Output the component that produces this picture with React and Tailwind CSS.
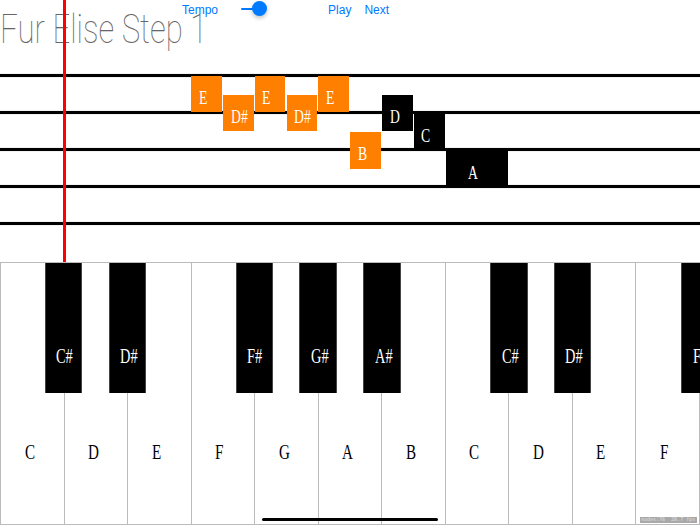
const NOTES = [
  { name: 'E', col: 6, row: 0, color: 'orange' },
  { name: 'D#', col: 7, row: 1, color: 'orange' },
  { name: 'E', col: 8, row: 0, color: 'orange' },
  { name: 'D#', col: 9, row: 1, color: 'orange' },
  { name: 'E', col: 10, row: 0, color: 'orange' },
  { name: 'B', col: 11, row: 3, color: 'orange' },
  { name: 'D', col: 12, row: 1, color: 'black' },
  { name: 'C', col: 13, row: 2, color: 'black' },
  { name: 'A', col: 14, row: 4, color: 'black', span: 2 },
]

const WHITE_KEYS = ['C', 'D', 'E', 'F', 'G', 'A', 'B', 'C', 'D', 'E', 'F']
const BLACK_KEYS = [
  { name: 'C#', at: 1 },
  { name: 'D#', at: 2 },
  { name: 'F#', at: 4 },
  { name: 'G#', at: 5 },
  { name: 'A#', at: 6 },
  { name: 'C#', at: 8 },
  { name: 'D#', at: 9 },
  { name: 'F#', at: 11 },
]

const COL = 700 / 22
const KEY = 700 / 11
const serif = "font-['Liberation_Serif','Times_New_Roman',serif]"

function Slider() {
  return (
    <div className="flex items-center ml-[23px] mt-[1px]">
      <div className="w-[12px] h-[2px] bg-[#007aff] rounded-l" />
      <div className="w-[15px] h-[15px] -ml-[1px] rounded-full bg-[#007aff] shadow-[0_2px_4px_rgba(0,0,0,0.25)]" />
    </div>
  )
}

export default function App() {
  return (
    <div className="relative w-[700px] h-[525px] overflow-hidden bg-white">
      {/* Header: title and controls share one grid cell */}
      <div className="grid h-[62px]">
        <div className="col-start-1 row-start-1">
          <div className="mt-[9px] inline-block origin-left scale-x-[0.76] font-['Roboto',sans-serif] font-thin text-[41px] leading-none text-[#666] whitespace-nowrap">
            Fur Elise Step 1
          </div>
        </div>
        <div className="col-start-1 row-start-1 flex items-start font-['Liberation_Sans',Arial,sans-serif] text-[12px] leading-none text-[#007aff]">
          <span className="ml-[182px] mt-[4px]">Tempo</span>
          <Slider />
          <span className="ml-[61px] mt-[4px]">Play</span>
          <span className="ml-[13px] mt-[4px]">Next</span>
        </div>
      </div>

      {/* Staff */}
      <div className="relative h-[200px]">
        <div className="flex flex-col gap-[34px] pt-[12px]">
          {[0, 1, 2, 3, 4].map((i) => (
            <div key={i} className="h-[3px] bg-black shadow-[0_0_1px_#777]" />
          ))}
        </div>
        {NOTES.map((n, i) => (
          <div
            key={i}
            className={`absolute h-[36.5px] flex items-center pt-[7px] ${n.span ? 'pl-[22px]' : 'pl-[7.5px]'} ${n.color === 'orange' ? 'bg-[#ff8000]' : 'bg-black'}`}
            style={{
              left: n.col * COL + 0.3,
              top: 13.7 + n.row * 18.8,
              width: (n.span || 1) * COL - 1.2,
            }}
          >
            <span className={`inline-block origin-left scale-x-[0.72] text-[19px] leading-none text-white ${serif}`}>{n.name}</span>
          </div>
        ))}
      </div>

      {/* Keyboard */}
      <div className="relative h-[263px] flex border-t border-r border-b border-[#bbb]">
        {WHITE_KEYS.map((k, i) => (
          <div key={i} className="flex-1 border-l border-[#bbb] pl-[23.5px] pt-[178px]">
            <span className={`inline-block origin-left scale-x-[0.72] text-[21px] leading-none text-black ${serif}`}>{k}</span>
          </div>
        ))}
        {BLACK_KEYS.map((k, i) => (
          <div
            key={i}
            className="absolute top-0 h-[130px] w-[37.5px] bg-black border-x border-[#444] pl-[10.5px] pt-[82px]"
            style={{ left: k.at * KEY - 18.75 }}
          >
            <span className={`inline-block origin-left scale-x-[0.72] text-[20px] leading-none text-white ${serif}`}>{k.name}</span>
          </div>
        ))}
      </div>

      {/* Playhead */}
      <div className="absolute left-[62.5px] top-0 w-[3px] h-[262px] bg-[#ff0000]" />

      {/* Home indicator */}
      <div className="absolute left-[262px] top-[517.5px] w-[176px] h-[3px] rounded-full bg-black" />

      {/* Debug label */}
      <div className="absolute left-[640px] top-[517px] w-[57px] h-[5.5px] bg-[#a9a9a9] flex items-center pl-[1px] font-['DejaVu_Sans_Mono',monospace] text-[5px] leading-none text-[#e0e0e0] whitespace-nowrap">
        nodes:76&nbsp;&nbsp;28.7 fps
      </div>
    </div>
  )
}
